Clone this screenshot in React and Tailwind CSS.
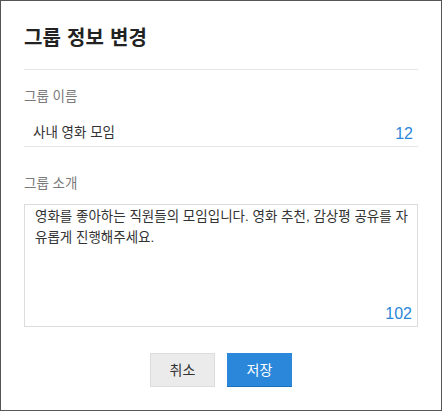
const FONT = "font-['Liberation_Sans','Noto_Sans_CJK_KR',sans-serif]";

export default function App() {
    const name = '사내 영화 모임';
    const intro = '영화를 좋아하는 직원들의 모임입니다. 영화 추천, 감상평 공유를 자유롭게 진행해주세요.';

    return (
        <div className={`w-[442px] h-[411px] bg-white border border-[#555] px-[23px] pt-[23px] ${FONT}`}>
            {/* Header */}
            <div className="pb-[17px] border-b border-[#e6e6e6]">
                <h1 className="text-[20px] leading-7 font-bold tracking-[0.2px] text-[#222]">그룹 정보 변경</h1>
            </div>

            {/* Group name */}
            <div className="mt-[17px] text-[13.5px] leading-5 text-[#7a7a7a]">그룹 이름</div>
            <div className="h-[40px] flex items-end justify-between pl-[9px] pr-[5px] pb-[3px] border-b border-[#e6e6e6]">
                <span className="text-[13.5px] leading-5 text-[#333]">{name}</span>
                <span className="text-base leading-[18px] text-[#2b87da]">{name.length + 4}</span>
            </div>

            {/* Group intro */}
            <div className="mt-[27px] text-[13.5px] leading-5 text-[#7a7a7a]">그룹 소개</div>
            <div className="mt-[10px] h-[123px] flex flex-col justify-between border border-[#dcdcdc] pl-[10px] pr-[5px] pt-[1px] pb-[3px]">
                <p className="text-[13.5px] leading-[21px] break-all text-[#333]">{intro}</p>
                <span className="self-end text-base leading-[18px] text-[#2b87da]">102</span>
            </div>

            {/* Actions */}
            <div className="mt-[26px] flex justify-center gap-3">
                <button className="w-[65px] h-[34px] bg-[#ebebeb] border border-[#dcdcdc] text-sm text-[#333]">취소</button>
                <button className="w-[65px] h-[34px] bg-[#2b87da] border-b border-[#1f6fbf] text-sm text-white">저장</button>
            </div>
        </div>
    );
}
